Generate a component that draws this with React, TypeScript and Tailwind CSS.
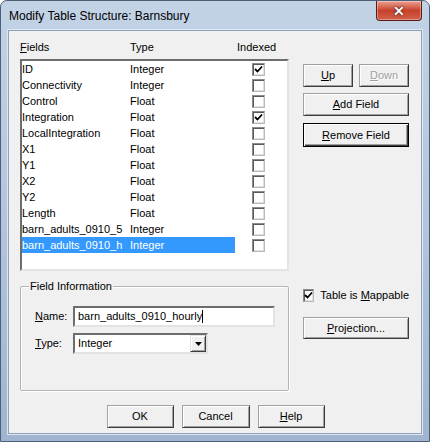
import React from "react";

const F = { fontFamily: '"Liberation Sans", Arial, sans-serif' };

function U({ children }: { children: React.ReactNode }) {
  return <span className="underline underline-offset-[1px]">{children}</span>;
}

function Check({ checked }: { checked?: boolean }) {
  return (
    <div className="w-[13px] h-[13px] bg-white border border-t-[#8a8a8a] border-l-[#8a8a8a] border-r-[#b8b8b8] border-b-[#b8b8b8] shadow-[inset_1px_1px_0_#5a5a5a,inset_-1px_-1px_0_#e0e0e0] flex items-center justify-center">
      {checked && (
        <svg width="9" height="9" viewBox="0 0 9 9">
          <path d="M1 4 L3.5 6.5 L8 1.5" stroke="#000" strokeWidth="1.8" fill="none" />
        </svg>
      )}
    </div>
  );
}

const rows: [string, string, boolean][] = [
  ["ID", "Integer", true],
  ["Connectivity", "Integer", false],
  ["Control", "Float", false],
  ["Integration", "Float", true],
  ["LocalIntegration", "Float", false],
  ["X1", "Float", false],
  ["Y1", "Float", false],
  ["X2", "Float", false],
  ["Y2", "Float", false],
  ["Length", "Float", false],
  ["barn_adults_0910_5", "Integer", false],
  ["barn_adults_0910_h", "Integer", false],
];

const btn =
  "flex items-center justify-center bg-[#f0f0f0] border border-t-[#a0a0a0] border-l-[#a0a0a0] border-r-[#3c3c3c] border-b-[#3c3c3c] shadow-[inset_1px_1px_0_#fff,inset_-1px_-1px_0_#a0a0a0] text-[11px] text-black";

export default function App() {
  return (
    <div
      className="w-[430px] h-[442px] flex flex-col rounded-t-[7px] border border-[#4d5f78] bg-gradient-to-b from-[#c3d3e6] via-[#b2c5dc] to-[#9fb4cf] overflow-hidden"
      style={F}
    >
      {/* title bar */}
      <div className="h-[29px] flex items-start justify-between pl-[8px] pr-[7px]">
        <div className="pt-[6px] text-[12px] text-black">Modify Table Structure: Barnsbury</div>
        <div className="w-[46px] h-[20px] rounded-b-[4px] border border-t-0 border-[#5a1c14] bg-gradient-to-b from-[#e8a090] via-[#c8402c] to-[#d2604a] flex items-center justify-center shadow-[inset_0_0_0_1px_rgba(255,255,255,0.35)]">
          <span className="text-white text-[14px] font-bold leading-none [text-shadow:0_0_2px_#3a0a05,0_0_1px_#3a0a05]">✕</span>
        </div>
      </div>

      {/* client area */}
      <div className="mx-[7px] mb-[7px] flex-1 bg-[#f0f0f0] border border-[#8ea2bb] shadow-[0_0_0_1px_#dde6f1] flex flex-col">
        <div className="flex pl-[11px] pt-[8px]">
          {/* left column */}
          <div className="w-[269px] flex flex-col">
            <div className="h-[16px] flex items-center text-[11px] text-black">
              <div className="w-[110px]"><U>F</U>ields</div>
              <div className="w-[107px]">Type</div>
              <div>Indexed</div>
            </div>
            <div className="mt-[4px] h-[212px] bg-white border-2 border-t-[#6d6d6d] border-l-[#6d6d6d] border-r-[#e3e3e3] border-b-[#e3e3e3]">
              {rows.map(([n, t, c], i) => {
                const sel = i === rows.length - 1;
                return (
                  <div key={n} className="h-[16px] flex items-center text-[11px]">
                    <div
                      className={
                        sel
                          ? "w-[213px] h-[16px] flex items-center bg-[#3399ff] text-white"
                          : "w-[213px] h-[16px] flex items-center text-black"
                      }
                    >
                      <div className="w-[108px] whitespace-nowrap">{n}</div>
                      <div>{t}</div>
                    </div>
                    <div className="ml-[17px]">
                      <Check checked={c} />
                    </div>
                  </div>
                );
              })}
            </div>

            {/* group */}
            <div className="relative mt-[15px] h-[105px] rounded-[2px] border border-[#b4b4b4] shadow-[inset_1px_1px_0_#fff,1px_1px_0_#fff] pt-[19px] pl-[14px]">
              <span className="absolute -top-[8px] left-[8px] px-[1px] bg-[#f0f0f0] text-[11px] text-black leading-[14px]">
                Field Information
              </span>
              <div className="flex items-center h-[21px]">
                <div className="w-[38px] text-[11px] text-black"><U>N</U>ame:</div>
                <div className="w-[202px] h-[21px] bg-white border-2 border-t-[#6d6d6d] border-l-[#6d6d6d] border-r-[#e3e3e3] border-b-[#e3e3e3] flex items-center pl-[3px] text-[11px] text-black">
                  <span>barn_adults_0910_hourly</span>
                  <span className="w-px h-[13px] bg-black" />
                </div>
              </div>
              <div className="flex items-center h-[21px] mt-[6px]">
                <div className="w-[38px] text-[11px] text-black"><U>T</U>ype:</div>
                <div className="w-[135px] h-[21px] bg-white border-2 border-t-[#6d6d6d] border-l-[#6d6d6d] border-r-[#e3e3e3] border-b-[#e3e3e3] flex items-center justify-between pl-[3px] text-[11px] text-black">
                  <span>Integer</span>
                  <div className="w-[16px] h-[17px] bg-[#f0f0f0] border border-t-[#e3e3e3] border-l-[#e3e3e3] border-r-[#3c3c3c] border-b-[#3c3c3c] shadow-[inset_1px_1px_0_#fff,inset_-1px_-1px_0_#a0a0a0] flex items-center justify-center">
                    <svg width="7" height="4" viewBox="0 0 7 4">
                      <path d="M0 0 H7 L3.5 4 Z" fill="#000" />
                    </svg>
                  </div>
                </div>
              </div>
            </div>
          </div>

          {/* right column */}
          <div className="ml-[14px] w-[106px] flex flex-col pt-[25px]">
            <div className="flex justify-between">
              <div className={btn + " w-[50px] h-[23px]"}><span><U>U</U>p</span></div>
              <div className={btn + " w-[50px] h-[23px] text-[#a0a0a0]"}>
                <span className="text-[#a0a0a0] [text-shadow:1px_1px_0_#fff]"><U>D</U>own</span>
              </div>
            </div>
            <div className={btn + " mt-[6px] h-[23px]"}><span><U>A</U>dd Field</span></div>
            <div className="mt-[7px] h-[24px] flex items-center justify-center bg-[#f0f0f0] border border-black shadow-[inset_1px_1px_0_#fff,inset_-1px_-1px_0_#3c3c3c,inset_-2px_-2px_0_#a0a0a0] text-[11px] text-black">
              <span><U>R</U>emove Field</span>
            </div>

            <div className="mt-[142px] flex items-center h-[13px]">
              <Check checked />
              <span className="ml-[6px] text-[11px] text-black whitespace-nowrap">Table is <U>M</U>appable</span>
            </div>
            <div className={btn + " mt-[15px] h-[22px]"}><span><U>P</U>rojection...</span></div>
          </div>
        </div>

        {/* bottom buttons */}
        <div className="flex justify-center gap-[8px] mt-[14px] pl-[1px]">
          <div className={btn + " w-[67px] h-[23px]"}>OK</div>
          <div className={btn + " w-[68px] h-[23px]"}>Cancel</div>
          <div className={btn + " w-[67px] h-[23px]"}><span><U>H</U>elp</span></div>
        </div>
      </div>
    </div>
  );
}
